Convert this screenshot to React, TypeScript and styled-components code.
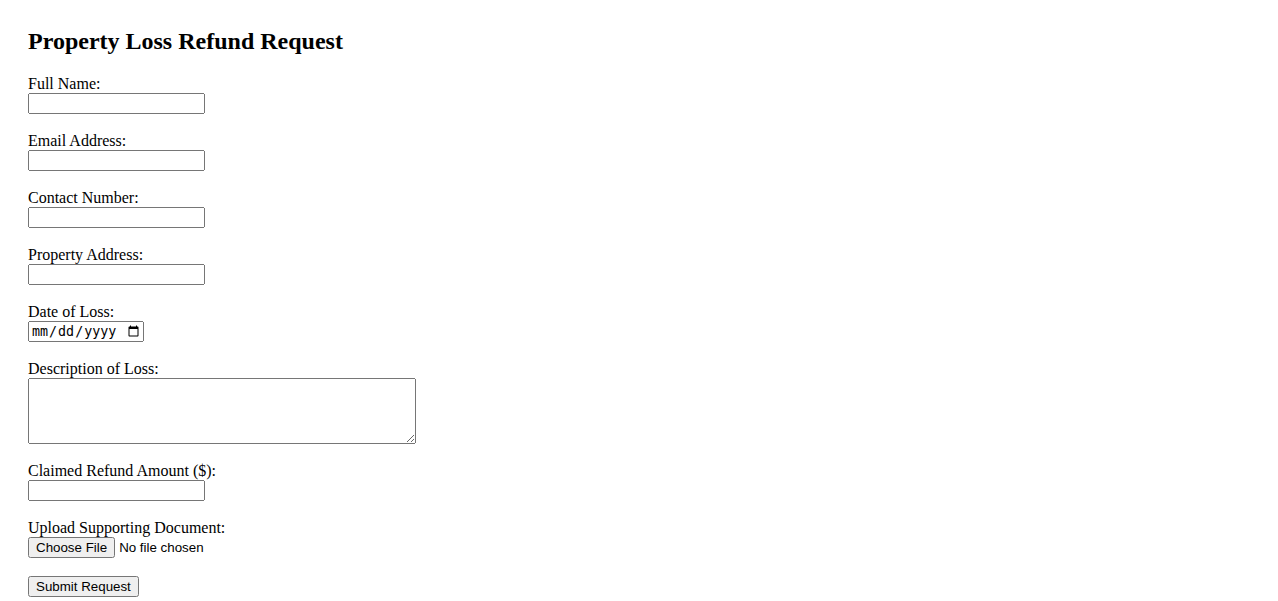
import styled, { createGlobalStyle } from 'styled-components';

const GlobalStyle = createGlobalStyle`
  body {
    margin: 0;
    padding: 28px;
    background: #fff;
    color: #000;
    font-family: "Liberation Serif", "Times New Roman", serif;
    font-size: 16px;
  }
`;

const Title = styled.h2`
  margin: 0 0 20px;
  font-size: 24px;
  font-weight: bold;
`;

const Form = styled.form`
  display: flex;
  flex-direction: column;
  align-items: flex-start;
  gap: 18px;
`;

const Field = styled.div`
  display: flex;
  flex-direction: column;
  align-items: flex-start;
`;

const Label = styled.label`
  display: block;
  line-height: 18px;
`;

const TextInput = styled.input<{ $width?: number }>`
  margin: 0;
  box-sizing: border-box;
  height: 21px;
  ${({ $width }) => ($width ? `width: ${$width}px;` : '')}
`;

const Description = styled.textarea`
  margin: 0;
  width: 388px;
  height: 66px;
  box-sizing: border-box;
`;

const SubmitBtn = styled.button`
  margin: 0;
`;

const fields = [
  { id: 'name', label: 'Full Name:', type: 'text', width: 177 },
  { id: 'email', label: 'Email Address:', type: 'email', width: 177 },
  { id: 'phone', label: 'Contact Number:', type: 'tel', width: 177 },
  { id: 'address', label: 'Property Address:', type: 'text', width: 177 },
  { id: 'date', label: 'Date of Loss:', type: 'date', width: 116 },
];

const App = () => {
  return (
    <>
      <GlobalStyle />
      <Title>Property Loss Refund Request</Title>
      <Form onSubmit={(e) => e.preventDefault()}>
        {fields.map((f) => (
          <Field key={f.id}>
            <Label htmlFor={f.id}>{f.label}</Label>
            <TextInput id={f.id} type={f.type} $width={f.width} />
          </Field>
        ))}
        <Field>
          <Label htmlFor='description'>Description of Loss:</Label>
          <Description id='description' />
        </Field>
        <Field>
          <Label htmlFor='amount'>Claimed Refund Amount ($):</Label>
          <TextInput id='amount' type='number' $width={177} />
        </Field>
        <Field>
          <Label htmlFor='document'>Upload Supporting Document:</Label>
          <TextInput id='document' type='file' />
        </Field>
        <SubmitBtn type='submit'>Submit Request</SubmitBtn>
      </Form>
    </>
  );
};

export default App;
